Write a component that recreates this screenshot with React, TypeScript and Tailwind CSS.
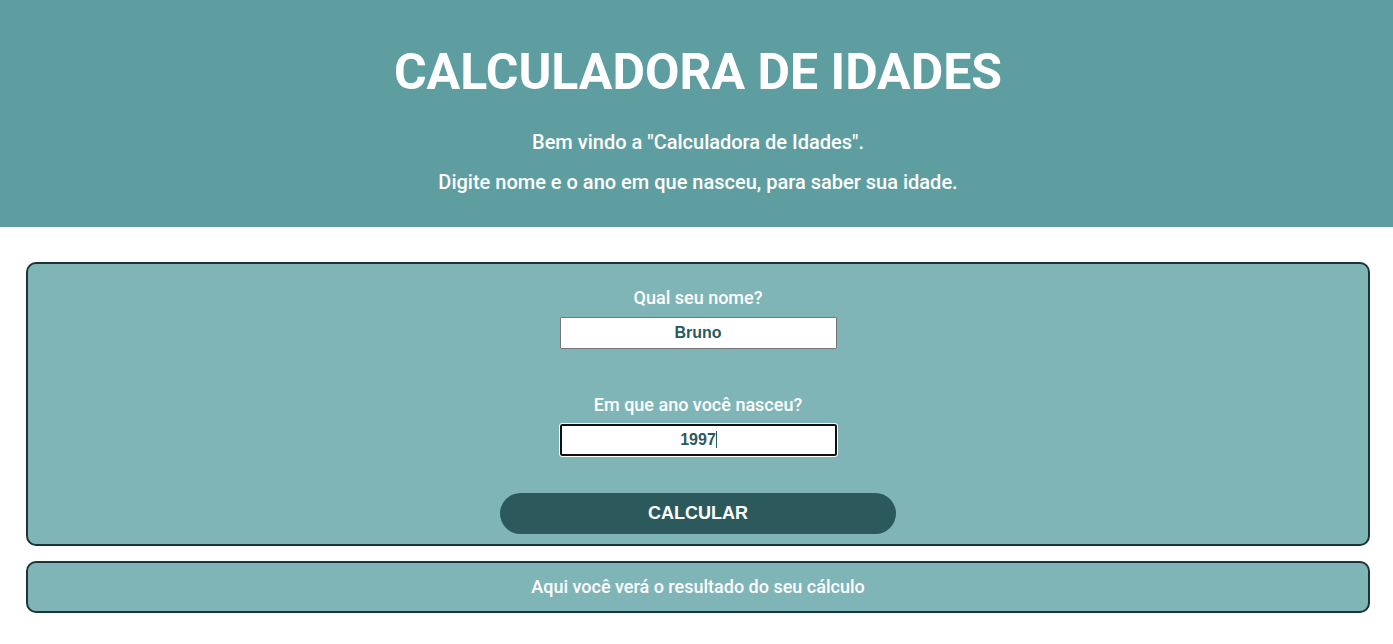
export default function App() {
  return (
    <div className="bg-white font-[Roboto,sans-serif] text-white">
      <header className="flex flex-col items-center bg-[#5f9ea0] pt-[42px] pb-[33px] pl-[3px] text-center">
        <h1 className="text-[50px] leading-[60px] font-bold">CALCULADORA DE IDADES</h1>
        <p className="mt-[28px] text-[20px] leading-[24px] font-medium">Bem vindo a "Calculadora de Idades".</p>
        <p className="mt-4 text-[20px] leading-[24px] font-medium">Digite nome e o ano em que nasceu, para saber sua idade.</p>
      </header>
      <main className="flex flex-col gap-[15px] pt-[35px] pr-[23px] pl-[26px]">
        <form
          className="flex flex-col items-center rounded-[10px] border-2 border-[#1b3536] bg-[#80b5b7] pt-[23px] pb-[10px]"
          onSubmit={(event) => event.preventDefault()}
        >
          <label htmlFor="nome" className="text-[18px] leading-[22px] font-medium">Qual seu nome?</label>
          <input
            id="nome"
            type="text"
            defaultValue="Bruno"
            className="mt-2 h-8 w-[277px] rounded-[1px] border border-[#767676] bg-white text-center font-['Liberation_Sans',sans-serif] text-[16px] font-bold text-[#2c5a5c]"
          />
          <label htmlFor="ano" className="mt-[45px] text-[18px] leading-[22px] font-medium">Em que ano você nasceu?</label>
          <div className="relative mt-2 h-8 w-[277px]">
            <input
              id="ano"
              type="text"
              inputMode="numeric"
              defaultValue="1997"
              autoFocus
              className="peer block h-full w-full rounded-[2px] border-2 border-[#101010] bg-white text-center font-['Liberation_Sans',sans-serif] text-[16px] font-bold text-[#2c5a5c] caret-transparent outline-1 outline-white"
            />
            <span aria-hidden="true" className="pointer-events-none absolute top-[7px] left-[156px] hidden h-[17px] w-px bg-[#2c5a5c] peer-focus:block" />
          </div>
          <button
            type="submit"
            className="mt-[37px] h-[41px] w-[396px] rounded-full bg-[#2c5a5c] font-['Liberation_Sans',sans-serif] text-[18px] font-bold"
          >
            CALCULAR
          </button>
        </form>
        <output
          htmlFor="nome ano"
          className="block rounded-[10px] border-2 border-[#1b3536] bg-[#80b5b7] py-[13px] text-center text-[18px] leading-[22px] font-medium"
        >
          Aqui você verá o resultado do seu cálculo
        </output>
      </main>
    </div>
  );
}
